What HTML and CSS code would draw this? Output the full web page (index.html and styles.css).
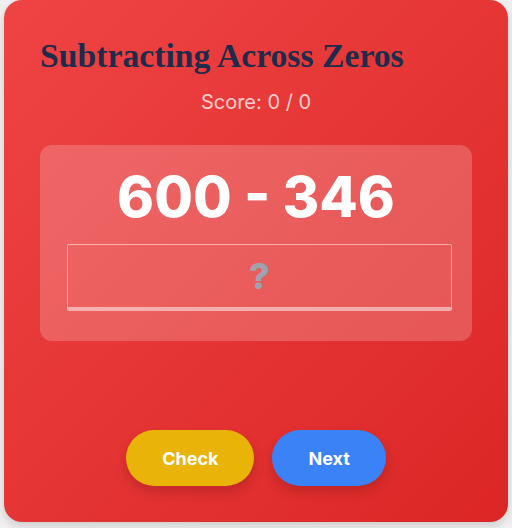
FILE: index.html
```html
<!DOCTYPE html>
<html lang="en">

<head>
    <meta charset="UTF-8" />
    <meta name="viewport" content="width=device-width, initial-scale=1.0" />
    <title>Subtracting Across Zeros</title>
    <link rel="stylesheet" href="styles.css">
</head>

<body>
    <div class="card">
        <h1 class="title">Subtracting Across Zeros</h1>
        <div class="score">Score: 0 / 0</div>

        <div class="problem">
            <div class="question">600 - 346</div>
            <input type="text" class="answer" placeholder="?">
        </div>

        <div class="actions">
            <button class="btn btn-check">Check</button>
            <button class="btn btn-next">Next</button>
        </div>
    </div>
</body>

</html>
```

FILE: styles.css
```css
body {
    margin: 0;
    padding: 0 4px 6px;
    background: #f0f0f0;
    font-family: Inter, "Liberation Sans", sans-serif;
}

.card {
    height: 522px;
    box-sizing: border-box;
    padding: 36px;
    border-radius: 18px;
    background: linear-gradient(135deg, #ef4444, #dc2626);
    box-shadow: 0 4px 10px rgba(0, 0, 0, 0.15);
    display: flex;
    flex-direction: column;
}

.title {
    margin: 0;
    font-family: "Liberation Serif", "Times New Roman", serif;
    font-size: 33.7px;
    font-weight: bold;
    color: #1e2b4b;
    line-height: 40px;
}

.score {
    margin-top: 14px;
    text-align: center;
    font-size: 20px;
    color: rgba(255, 255, 255, 0.75);
}

.problem {
    margin-top: 31px;
    padding: 20px 20px 30px;
    border-radius: 12px;
    background: rgba(255, 255, 255, 0.2);
    display: flex;
    flex-direction: column;
    align-items: center;
}

.question {
    font-size: 56px;
    font-weight: 800;
    color: #fff;
    line-height: 64px;
}

.answer {
    align-self: flex-start;
    margin: 15px 0 0 7px;
    width: 385px;
    height: 67px;
    box-sizing: border-box;
    border: 1px solid rgba(255, 255, 255, 0.5);
    border-bottom: 4px solid rgba(255, 255, 255, 0.5);
    border-radius: 2px;
    background: transparent;
    text-align: center;
    font-family: inherit;
    font-size: 36px;
    font-weight: 800;
    color: #fff;
}

.answer::placeholder {
    color: #9ca3af;
}

.actions {
    margin-top: auto;
    display: flex;
    justify-content: center;
    gap: 18px;
}

.btn {
    height: 56px;
    padding: 0 36px;
    border: none;
    border-radius: 28px;
    font-family: inherit;
    font-size: 18px;
    font-weight: bold;
    color: #fff;
    box-shadow: 0 6px 12px rgba(0, 0, 0, 0.15);
}

.btn-check {
    background: #eab308;
}

.btn-next {
    background: #3b82f6;
}
```
